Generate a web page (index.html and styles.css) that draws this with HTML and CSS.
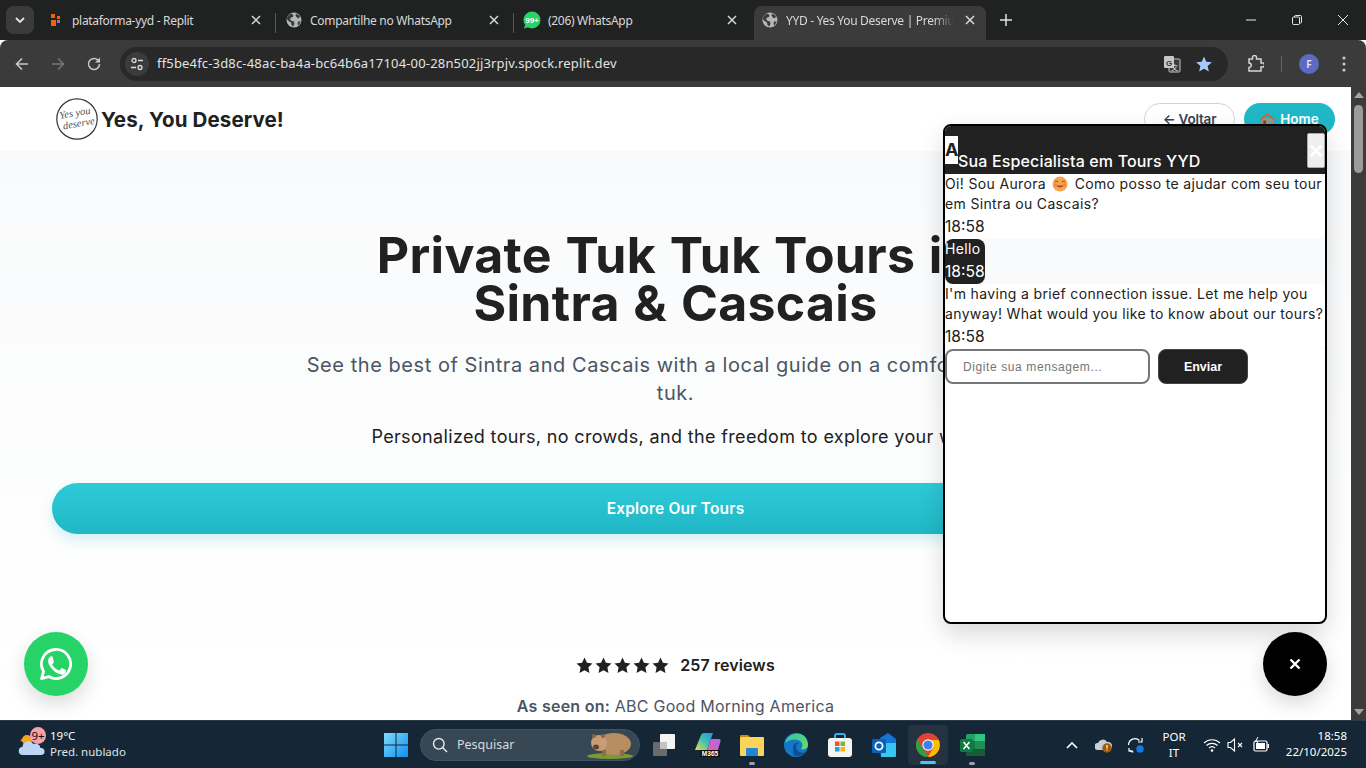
FILE: index.html
```html
<!DOCTYPE html>
<html lang="pt">
<head>
<meta charset="utf-8">
<title>YYD - Yes You Deserve</title>
<link rel="stylesheet" href="styles.css">
</head>
<body>
<svg class="defs" width="0" height="0" aria-hidden="true">
  <symbol id="globe" viewBox="0 0 16 16">
    <circle cx="8" cy="8" r="7.5" fill="#b4b6b8"/>
    <path d="M5 1.5 7.5 3 7 5 5 5.5 4 7.5 6 9 8 9.5 8.5 12 7 14.5 5.5 13 5 10.5 2.500 9 .8 7A7.500 7.500 0 0 1 5 1.500ZM10 1.500 13.500 3.500 14 5 12 6.500 10.500 5 9.500 3.500ZM12 9.500 14.800 9.500 12.500 13.500 11.500 12Z" fill="#3b3b3b"/>
  </symbol>
  <symbol id="close" viewBox="0 0 16 16">
    <path d="M4 4l8 8M12 4l-8 8" stroke="#d8d8d8" stroke-width="1.500" fill="none"/>
  </symbol>
  <symbol id="star" viewBox="0 0 24 24">
    <path d="M12 .8l3.400 7.300 7.900 1-5.800 5.500 1.500 7.900L12 18.600l-7 3.900 1.500-7.900L.7 9.100l7.900-1z" fill="#212121"/>
  </symbol>
</svg>

<header class="tabstrip">
  <button class="tab-menu" type="button">
    <svg width="10" height="6" viewBox="0 0 10 6"><path d="M1 1l4 4 4-4" stroke="#e3e3e3" stroke-width="1.800" fill="none"/></svg>
  </button>
  <div class="tab tab-sep">
    <svg class="favicon" viewBox="0 0 16 16"><rect x="3" y="2" width="4" height="4" fill="#f26207"/><rect x="9" y="4" width="3" height="3" fill="#f26207"/><rect x="3" y="8" width="5" height="6" fill="#f26207"/><rect x="9" y="8" width="3" height="3" fill="#a268d8"/></svg>
    <span class="tab-title">plataforma-yyd - Replit</span>
    <svg class="tab-close"><use href="#close"/></svg>
  </div>
  <div class="tab tab-sep">
    <svg class="favicon"><use href="#globe"/></svg>
    <span class="tab-title">Compartilhe no WhatsApp</span>
    <svg class="tab-close"><use href="#close"/></svg>
  </div>
  <div class="tab">
    <svg class="favicon favicon-wa" viewBox="0 0 18 18"><circle cx="9" cy="9" r="8.500" fill="#25d366"/><path d="M1 17.500l1.500-5 3.500 3.500z" fill="#25d366"/><text x="9" y="12" class="wa-badge-text">99+</text></svg>
    <span class="tab-title">(206) WhatsApp</span>
    <svg class="tab-close"><use href="#close"/></svg>
  </div>
  <div class="tab tab-active">
    <svg class="favicon"><use href="#globe"/></svg>
    <span class="tab-title tab-fade">YYD - Yes You Deserve | Premium Tours</span>
    <svg class="tab-close"><use href="#close"/></svg>
  </div>
  <svg class="new-tab" width="12" height="12" viewBox="0 0 12 12"><path d="M6 0v12M0 6h12" stroke="#e3e3e3" stroke-width="1.500"/></svg>
  <div class="win-controls">
    <svg width="10" height="10" viewBox="0 0 10 10"><path d="M0 5h10" stroke="#e6e6e6" stroke-width="1"/></svg>
    <svg width="10" height="10" viewBox="0 0 10 10"><rect x=".5" y="2" width="7" height="7.500" rx="1" fill="none" stroke="#e6e6e6"/><path d="M2.500 2V1.500a1 1 0 0 1 1-1h5a1 1 0 0 1 1 1v5.500a1 1 0 0 1-1 1H8" fill="none" stroke="#e6e6e6"/></svg>
    <svg width="10" height="10" viewBox="0 0 10 10"><path d="M0 0l10 10M10 0L0 10" stroke="#e6e6e6"/></svg>
  </div>
</header>

<nav class="toolbar">
  <svg class="nav-icon" viewBox="0 0 16 16"><path d="M14 8H2.500M8 2.500L2.500 8 8 13.500" stroke="#c7c7c7" stroke-width="1.600" fill="none"/></svg>
  <svg class="nav-icon nav-gap" viewBox="0 0 16 16"><path d="M2 8h11.500M8 2.500L13.500 8 8 13.500" stroke="#757575" stroke-width="1.600" fill="none"/></svg>
  <svg class="nav-icon nav-gap" viewBox="0 0 16 16"><path d="M13.500 8a5.500 5.500 0 1 1-1.600-3.900L13.500 5.700" stroke="#c7c7c7" stroke-width="1.600" fill="none"/><path d="M14 1.500V6.500H9z" fill="#c7c7c7"/></svg>
  <div class="omnibox">
    <span class="site-settings">
      <svg width="14" height="14" viewBox="0 0 14 14"><circle cx="4" cy="3.500" r="2" fill="none" stroke="#dcdcdc" stroke-width="1.300"/><path d="M8 3.500h5M1 10.500h5" stroke="#dcdcdc" stroke-width="1.300"/><circle cx="10" cy="10.500" r="2" fill="none" stroke="#dcdcdc" stroke-width="1.300"/></svg>
    </span>
    <span class="url">ff5be4fc-3d8c-48ac-ba4a-bc64b6a17104-00-28n502jj3rpjv.spock.replit.dev</span>
    <svg class="translate" width="18" height="18" viewBox="0 0 18 18"><rect x="6" y="4" width="11" height="13" rx="1" fill="#3a3a3a" stroke="#c7c7c7"/><rect x="1" y="1" width="10" height="12" rx="1" fill="#c7c7c7"/><text x="6" y="10.500" class="tr-g">G</text><text x="11.500" y="14.500" class="tr-x">文</text></svg>
    <svg class="bookmark" width="18" height="18" viewBox="0 0 24 24"><path d="M12 2l3 7 7.500.7-5.700 5 1.700 7.300L12 18.200 5.500 22l1.700-7.300-5.700-5L9 9z" fill="#a8c7fa"/></svg>
  </div>
  <svg class="ext" width="18" height="18" viewBox="0 0 18 18"><path d="M3 5h3.500V3.500a2 2 0 0 1 4 0V5H15v4h1.500a2 2 0 0 1 0 4H15v4H3v-3.500a2 2 0 0 0 0-4.500z" transform="translate(0 -1)" fill="none" stroke="#d5d5d5" stroke-width="1.500"/></svg>
  <span class="tool-sep"></span>
  <span class="avatar">F</span>
  <svg class="kebab" width="4" height="16" viewBox="0 0 4 16"><circle cx="2" cy="2" r="1.600" fill="#c7c7c7"/><circle cx="2" cy="8" r="1.600" fill="#c7c7c7"/><circle cx="2" cy="14" r="1.600" fill="#c7c7c7"/></svg>
</nav>

<div class="viewport">
  <main class="page">
    <div class="site-header">
      <div class="brand">
        <svg class="brand-logo" viewBox="0 0 42 42">
          <circle cx="21" cy="21" r="20.200" fill="#fff" stroke="#333" stroke-width="1.200"/>
          <g transform="rotate(-10 21 21)">
            <text x="20" y="18" class="logo-text">Yes you</text>
            <text x="22" y="29" class="logo-text">deserve</text>
          </g>
        </svg>
        <span class="brand-name">Yes, You Deserve!</span>
      </div>
      <div class="header-actions">
        <a class="pill pill-outline">← Voltar</a>
        <a class="pill pill-solid">
          <svg width="15" height="15" viewBox="0 0 16 16"><path d="M2 15V7h12v8z" fill="#c98a62"/><path d="M0 8l8-7 8 7-1 1-7-6-7 6z" fill="#e0592f"/><rect x="3.500" y="9" width="3" height="6" fill="#7a4b35"/><rect x="9" y="9" width="3.500" height="3" fill="#57a8d8"/></svg>
          Home
        </a>
      </div>
    </div>

    <section class="hero">
      <h1>Private Tuk Tuk Tours in<br>Sintra &amp; Cascais</h1>
      <p class="hero-sub">See the best of Sintra and Cascais with a local guide on a comfortable tuk tuk.</p>
      <p class="hero-line">Personalized tours, no crowds, and the freedom to explore your way.</p>
      <div class="hero-actions">
        <a class="cta cta-primary">Explore Our Tours</a>
        <a class="cta cta-ghost">Talk to Our Team</a>
      </div>
      <div class="rating">
        <span class="stars">
          <svg><use href="#star"/></svg><svg><use href="#star"/></svg><svg><use href="#star"/></svg><svg><use href="#star"/></svg><svg><use href="#star"/></svg>
        </span>
        <span class="rating-count">257 reviews</span>
      </div>
      <p class="seen-on"><strong>As seen on:</strong> ABC Good Morning America</p>
    </section>
  </main>

  <aside class="scrollbar">
    <span class="sb-up"></span>
    <span class="sb-thumb"></span>
    <span class="sb-down"></span>
  </aside>

  <section class="chat">
    <div class="chat-head">
      <span class="chat-avatar">A</span>
      <span class="chat-title">Sua Especialista em Tours YYD</span>
      <button class="chat-x" type="button">×</button>
    </div>
    <div class="chat-log">
      <div class="msg msg-bot">
        <p>Oi! Sou Aurora <svg class="smile" width="16" height="16" viewBox="0 0 16 16"><circle cx="8" cy="8" r="7.500" fill="#f8a54a"/><path d="M3 6q1.500-1.500 3 0M10 6q1.500-1.500 3 0" stroke="#7c4a1e" fill="none"/><path d="M4 9.500q4 4 8 0z" fill="#a6461e"/><circle cx="3.500" cy="9" r="1.500" fill="#ef7a6d"/><circle cx="12.500" cy="9" r="1.500" fill="#ef7a6d"/></svg> Como posso te ajudar com seu tour em Sintra ou Cascais?</p>
        <time>18:58</time>
      </div>
      <div class="msg msg-user">
        <p>Hello</p>
        <time>18:58</time>
      </div>
      <div class="msg msg-bot">
        <p>I'm having a brief connection issue. Let me help you anyway! What would you like to know about our tours?</p>
        <time>18:58</time>
      </div>
    </div>
    <form class="chat-form">
      <input class="chat-input" type="text" placeholder="Digite sua mensagem...">
      <button class="chat-send" type="button">Enviar</button>
    </form>
  </section>

  <a class="fab fab-wa">
    <svg width="36" height="36" viewBox="0 0 24 24"><path d="M12 2.300A9.700 9.700 0 0 0 3.700 17L2.400 21.700l4.800-1.300A9.700 9.700 0 1 0 12 2.300z" fill="none" stroke="#fff" stroke-width="1.900" stroke-linejoin="round"/><path d="M8.900 6.900c-.3 0-.7.100-1 .5-.4.400-1.200 1.200-1.200 2.800s1.200 3.200 1.400 3.400c.2.200 2.300 3.600 5.700 4.900 2.800 1.100 3.400.9 4-.1-.1 0 .9-1.100 1-2.100-.1-.2-.2-.3-.5-.5l-2.100-1c-.3-.1-.5-.2-.7.100l-1 1.200c-.2.200-.4.300-.7.100-1.800-.8-3-1.600-4.200-3.600-.2-.3 0-.5.100-.6l.8-1c.1-.2.100-.4 0-.6L9.800 7.400c-.2-.5-.6-.5-.9-.5z" fill="#fff"/></svg>
  </a>
  <a class="fab fab-close">
    <svg width="12" height="12" viewBox="0 0 12 12"><path d="M1.500 1.500l9 9M10.500 1.500l-9 9" stroke="#fff" stroke-width="2.400"/></svg>
  </a>
</div>

<footer class="taskbar">
  <div class="tb-weather">
    <svg class="weather-icon" width="28" height="28" viewBox="0 0 28 28">
      <circle cx="9" cy="9" r="5" fill="#f5a623"/><path d="M2 10l6-6 2 7z" fill="#f5a623"/>
      <path d="M5 24a4 4 0 0 1-.5-8 6 6 0 0 1 11-3 5 5 0 0 1 7 4 3.500 3.500 0 0 1 1 7z" fill="#bcd4f5"/>
    </svg>
    <span class="weather-badge">9+</span>
    <div class="weather-text">
      <span>19°C</span>
      <span class="weather-sub">Pred. nublado</span>
    </div>
  </div>
  <svg class="win-logo" width="24" height="24" viewBox="0 0 24 24">
    <defs><linearGradient id="wg" x1="0" y1="0" x2="1" y2="1"><stop offset="0" stop-color="#7fdcfb"/><stop offset="1" stop-color="#0f8ff0"/></linearGradient></defs>
    <path d="M0 0h11.500v11.500H0zM12.500 0H24v11.500H12.500zM0 12.500h11.500V24H0zM12.500 12.500H24V24H12.500z" fill="url(#wg)"/>
  </svg>
  <div class="tb-search">
    <svg width="16" height="16" viewBox="0 0 16 16"><circle cx="6.800" cy="6.800" r="5.300" fill="none" stroke="#e8ecef" stroke-width="1.400"/><path d="M10.600 10.600l4.400 4.400" stroke="#e8ecef" stroke-width="1.400"/></svg>
    <span class="search-label">Pesquisar</span>
    <svg class="wombat" width="48" height="30" viewBox="0 0 48 30">
      <ellipse cx="24" cy="26" rx="23" ry="3" fill="#7c9a34"/>
      <ellipse cx="28" cy="14" rx="17" ry="11" fill="#b98d62"/>
      <ellipse cx="13" cy="13" rx="8" ry="8" fill="#c69d74"/>
      <circle cx="8" cy="6" r="2" fill="#8b6644"/><circle cx="17" cy="6" r="2" fill="#8b6644"/>
      <ellipse cx="10" cy="17" rx="3" ry="2.500" fill="#5b4433"/>
      <rect x="16" y="20" width="4" height="6" fill="#8f6b48"/><rect x="34" y="20" width="4" height="6" fill="#8f6b48"/>
    </svg>
  </div>
  <div class="tb-apps">
    <span class="app"><svg width="24" height="24" viewBox="0 0 24 24"><rect x="1" y="9" width="14" height="14" rx="1" fill="#6a6a6a"/><rect x="8" y="1" width="15" height="15" rx="1" fill="#f3f3f3"/><rect x="8" y="9" width="7" height="7" fill="#c3c3c3"/></svg></span>
    <span class="app"><svg width="28" height="28" viewBox="0 0 28 28"><defs><linearGradient id="m1" x1="0" y1="1" x2="1" y2="0"><stop offset="0" stop-color="#f7d94c"/><stop offset=".5" stop-color="#3ec6a8"/><stop offset="1" stop-color="#2b8cee"/></linearGradient><linearGradient id="m2" x1="0" y1="1" x2="1" y2="0"><stop offset="0" stop-color="#e85bb0"/><stop offset="1" stop-color="#a86de8"/></linearGradient></defs><path d="M1 19 7 4Q8 2 10 2H19L13 19z" fill="url(#m1)"/><path d="M13 19 17 8H25Q27 8 26.500 10L24 19z" fill="url(#m2)"/><rect x="6" y="19" width="20" height="7" fill="#111"/><text x="16" y="25" class="m365">M365</text></svg></span>
    <span class="app"><svg width="24" height="24" viewBox="0 0 24 24"><path d="M0 3a1 1 0 0 1 1-1h7l2 2h-10z" fill="#c98f10"/><rect y="4" width="24" height="19" rx="1" fill="#fcd45c"/><rect x="6" y="15" width="12" height="8" rx="1" fill="#1e88d4"/></svg><i class="dot"></i></span>
    <span class="app"><svg width="26" height="26" viewBox="0 0 26 26"><defs><linearGradient id="e1" x1="0" y1="0" x2="1" y2="1"><stop offset="0" stop-color="#2fc4a8"/><stop offset="1" stop-color="#6bdd62"/></linearGradient></defs><circle cx="13" cy="13" r="12" fill="#1478c8"/><path d="M2 11C4 3 12 0 18 2c5 2 7 7 7 11 0 3-3 5-7 4 2-2 2-6-1-8-5-3-11-1-15 2z" fill="url(#e1)"/><path d="M10 15c0-3 3-5 6-4-3 0-4 5-1 8 2 2 5 2 7 1-3 4-8 5-11 3-1-2-1-5-1-8z" fill="#0e4f94"/></svg></span>
    <span class="app"><svg width="24" height="26" viewBox="0 0 24 26"><path d="M7 7V4a2 2 0 0 1 2-2h6a2 2 0 0 1 2 2v3" fill="none" stroke="#2ab0e8" stroke-width="2"/><rect y="6" width="24" height="19" rx="3" fill="#f4f4f4"/><rect x="7" y="9.500" width="4.500" height="4.500" fill="#e8532a"/><rect x="12.500" y="9.500" width="4.500" height="4.500" fill="#7cb82f"/><rect x="7" y="15" width="4.500" height="4.500" fill="#1ca0e8"/><rect x="12.500" y="15" width="4.500" height="4.500" fill="#fbb40c"/></svg></span>
    <span class="app"><svg width="26" height="26" viewBox="0 0 26 26"><path d="M9 6l8-5 8 6v13H9z" fill="#1476d2"/><path d="M9 11h16v13a1 1 0 0 1-1 1H10z" fill="#37c6f0"/><rect x="1" y="7" width="14" height="14" rx="1.500" fill="#0a5fb8"/><circle cx="8" cy="14" r="3.600" fill="none" stroke="#fff" stroke-width="1.800"/></svg></span>
    <span class="app app-active"><svg width="24" height="24" viewBox="0 0 24 24"><circle cx="12" cy="12" r="12" fill="#e44234"/><path d="M12 24A12 12 0 0 1 1.600 6L7 15.500 12.500 24z" fill="#2f9e44"/><path d="M12 7h10.700A12 12 0 0 1 12 24l5.500-9.500z" fill="#fbbc04"/><circle cx="12" cy="12" r="5.700" fill="#fff"/><circle cx="12" cy="12" r="4.600" fill="#3b82ee"/></svg><i class="bar"></i></span>
    <span class="app"><svg width="25" height="24" viewBox="0 0 25 24"><rect x="6" y="1" width="19" height="22" rx="1.500" fill="#21a366"/><rect x="15" y="1" width="10" height="7" fill="#33c481"/><rect x="6" y="8" width="9" height="8" fill="#107c41"/><rect x="15" y="8" width="10" height="8" fill="#1f8f56"/><rect x="6" y="16" width="19" height="7" fill="#185c37"/><rect x="0" y="6" width="13" height="13" rx="1.500" fill="#0f7b40"/><path d="M3.500 9l6 7M9.500 9l-6 7" stroke="#fff" stroke-width="1.600"/></svg><i class="dot"></i></span>
  </div>
  <div class="tb-tray">
    <svg class="tray-chevron" width="12" height="8" viewBox="0 0 12 8"><path d="M1 7l5-5 5 5" stroke="#fff" stroke-width="1.600" fill="none"/></svg>
    <svg class="tray-cloud" width="18" height="16" viewBox="0 0 18 16"><path d="M3 13a3.500 3.500 0 0 1 0-7 5 5 0 0 1 9-1 4 4 0 0 1 2 8z" fill="#c9ced2"/><circle cx="12" cy="11" r="4.700" fill="#a25a0a"/><path d="M12 8v3.500M12 12.500v1" stroke="#fff" stroke-width="1.200"/></svg>
    <svg class="tray-sync" width="18" height="18" viewBox="0 0 18 18"><path d="M1.500 9a6.500 6.500 0 0 1 11-4.500M15 2v4h-4M6 15H2v-3" stroke="#fff" stroke-width="1.200" fill="none"/><path d="M2.500 14.500a6.500 6.500 0 0 0 4 1.500" stroke="#fff" stroke-width="1.200" fill="none"/><circle cx="13" cy="13" r="3.700" fill="#1679e8"/></svg>
    <div class="tray-lang"><span>POR</span><span>IT</span></div>
    <svg class="tray-wifi" width="18" height="14" viewBox="0 0 18 14"><path d="M1 5a11.500 11.500 0 0 1 16 0M3.500 7.500a8 8 0 0 1 11 0M6 10a4.500 4.500 0 0 1 6 0" stroke="#fff" stroke-width="1.200" fill="none"/><circle cx="9" cy="12.500" r="1.300" fill="#fff"/></svg>
    <svg class="tray-mute" width="17" height="14" viewBox="0 0 17 14"><path d="M1 4.500h2.500L7.500 1v12l-4-3.500H1z" fill="none" stroke="#fff" stroke-width="1.100"/><path d="M11 5l4 4M15 5l-4 4" stroke="#fff" stroke-width="1.100"/></svg>
    <svg class="tray-batt" width="17" height="16" viewBox="0 0 17 16"><rect x="1" y="4" width="13" height="10" rx="1.500" fill="none" stroke="#fff" stroke-width="1.200"/><rect x="3" y="6" width="9" height="6" fill="#fff"/><rect x="14.500" y="7" width="1.500" height="4" fill="#fff"/><path d="M5 0L2.500 4.500H5L3.500 8" stroke="#fff" fill="none"/></svg>
    <div class="clock"><span>18:58</span><span>22/10/2025</span></div>
  </div>
</footer>
</body>
</html>
```

FILE: styles.css
```css
* { box-sizing: border-box; }
html, body { margin: 0; padding: 0; }
body {
  width: 1366px;
  height: 768px;
  overflow: hidden;
  display: flex;
  flex-direction: column;
  font-family: "Inter", "Liberation Sans", sans-serif;
  color: #212121;
  background: #fff;
}
.defs { position: absolute; }
p { margin: 0; }
a { text-decoration: none; }

/* ---------- browser chrome ---------- */
.tabstrip {
  height: 40px;
  flex: none;
  display: flex;
  align-items: flex-end;
  padding-left: 6px;
  background: #202222;
  font-family: "Noto Sans", "Open Sans", sans-serif;
  font-size: 12px;
  color: #d8d8d8;
}
.tab-menu {
  width: 28px;
  height: 28px;
  margin: 0 4px 6px 0;
  padding: 0;
  border: 0;
  border-radius: 8px;
  background: #3b3b3b;
  display: flex;
  align-items: center;
  justify-content: center;
}
.tab {
  position: relative;
  width: 238px;
  height: 34px;
  display: flex;
  align-items: center;
  gap: 8px;
  padding: 0 12px 6px 10px;
}
.tab-sep::after {
  content: "";
  position: absolute;
  right: 0;
  top: 7px;
  width: 1px;
  height: 20px;
  background: #5a5a5a;
}
.tab-active {
  width: 232px;
  margin: 0 2px;
  padding: 0 8px 6px;
  background: #3b3b3b;
  border-radius: 8px 8px 0 0;
}
.favicon { width: 16px; height: 16px; flex: none; }
.favicon-wa { width: 18px; height: 18px; margin: 0 -1px 0 -1px; overflow: visible; }
.wa-badge-text { font: 700 8px "Liberation Sans", sans-serif; fill: #fff; text-anchor: middle; }
.tab-title { flex: 1; min-width: 0; white-space: nowrap; overflow: hidden; letter-spacing: -.3px; }
.tab-fade { mask-image: linear-gradient(90deg, #000 88%, transparent 100%); }
.tab-close { width: 16px; height: 16px; flex: none; }
.new-tab { margin: 0 0 14px 12px; }
.win-controls {
  margin-left: auto;
  width: 138px;
  height: 40px;
  display: flex;
  align-items: center;
  justify-content: space-between;
  padding: 0 18px 0 18px;
}

.toolbar {
  height: 47px;
  flex: none;
  display: flex;
  align-items: center;
  padding-left: 14px;
  background: #3b3b3b;
  border-radius: 8px 8px 0 0;
}
.nav-icon { width: 16px; height: 16px; flex: none; }
.nav-gap { margin-left: 20px; }
.omnibox {
  width: 1108px;
  height: 34px;
  margin-left: 18px;
  display: flex;
  align-items: center;
  padding: 0 15px 0 5px;
  border-radius: 17px;
  background: #282828;
}
.site-settings {
  width: 24px;
  height: 24px;
  border-radius: 50%;
  background: #3b3b3b;
  display: flex;
  align-items: center;
  justify-content: center;
}
.url {
  margin: 0 0 2px 8px;
  font-family: "Noto Sans", sans-serif;
  font-size: 13px;
  letter-spacing: .17px;
  color: #e3e3e3;
  white-space: nowrap;
}
.translate { margin-left: auto; }
.tr-g { font: 700 8px "Liberation Sans", sans-serif; fill: #333; text-anchor: middle; }
.tr-x { font: 7px "Noto Sans CJK SC", sans-serif; fill: #ddd; text-anchor: middle; }
.bookmark { margin-left: 14px; }
.ext { margin-left: 18px; }
.tool-sep { width: 1px; height: 16px; margin-left: 17px; background: #666; }
.avatar {
  width: 20px;
  height: 20px;
  margin-left: 17px;
  border-radius: 50%;
  background: #5c6bc0;
  color: #e8e8f8;
  font-family: "Noto Sans", sans-serif;
  font-size: 10px;
  font-weight: 600;
  display: flex;
  align-items: center;
  justify-content: center;
}
.kebab { margin-left: 23px; }

/* ---------- page ---------- */
.viewport {
  position: relative;
  height: 633px;
  flex: none;
  display: flex;
  overflow: hidden;
}
.page { flex: 1; min-width: 0; overflow: hidden; }
.site-header {
  height: 64px;
  display: flex;
  align-items: center;
  justify-content: space-between;
  padding: 0 16px 0 56px;
  background: #fff;
}
.brand { display: flex; align-items: center; gap: 3px; }
.brand-logo { width: 42px; height: 42px; }
.logo-text { font: italic 10.500px "Liberation Serif", serif; fill: #555; text-anchor: middle; }
.brand-name { font-size: 20.500px; font-weight: 700; letter-spacing: .12px; color: #212121; }
.header-actions { display: flex; gap: 9px; }
.pill {
  width: 91px;
  height: 32px;
  border-radius: 16px;
  display: flex;
  align-items: center;
  justify-content: center;
  gap: 5px;
  font-size: 13.500px;
  font-weight: 600;
}
.pill-outline { border: 1px solid #d1d5db; background: #fff; color: #374151; letter-spacing: -.2px; }
.pill-solid { background: #20b8c6; color: #fff; }

.hero {
  height: 569px;
  padding: 80px 52px 0;
  text-align: center;
  background: linear-gradient(180deg, #f9fafb 0%, #fff 90%);
}
.hero h1 {
  margin: 0 0 24px;
  font-size: 50px;
  line-height: 48px;
  font-weight: 700;
  letter-spacing: .3px;
  word-spacing: 1.500px;
  color: #212121;
}
.hero-sub {
  max-width: 768px;
  margin: 0 auto 16px;
  font-size: 20px;
  line-height: 28px;
  letter-spacing: .55px;
  color: #4b5563;
}
.hero-line { margin-bottom: 32px; font-size: 18px; line-height: 28px; letter-spacing: .35px; color: #212121; }
.hero-actions { display: flex; flex-direction: column; gap: 16px; }
.cta {
  height: 51px;
  border-radius: 26px;
  display: flex;
  align-items: center;
  justify-content: center;
  font-size: 15.500px;
  font-weight: 600;
  letter-spacing: .2px;
  color: #fff;
}
.cta-primary {
  background: linear-gradient(180deg, #2ecad8, #20b7c6);
  box-shadow: 0 6px 14px rgba(32, 184, 198, .2);
}
.cta-ghost { height: 54px; border: 2px solid #fff; border-radius: 27px; }
.rating {
  margin-top: 48px;
  height: 26px;
  display: flex;
  align-items: center;
  justify-content: center;
  gap: 11px;
}
.stars { display: flex; gap: 2px; }
.stars svg { width: 17px; height: 17px; }
.rating-count { font-size: 16px; font-weight: 600; letter-spacing: .1px; color: #212121; }
.seen-on { margin-top: 16px; font-size: 16px; line-height: 24px; letter-spacing: .25px; color: #4b5563; }
.seen-on strong { font-weight: 600; }

.scrollbar {
  width: 15px;
  flex: none;
  background: #3b3b3b;
  display: flex;
  flex-direction: column;
  align-items: center;
}
.sb-up, .sb-down { width: 0; height: 0; border-left: 5px solid transparent; border-right: 5px solid transparent; }
.sb-up { margin-top: 5px; border-bottom: 6px solid #a3a3a3; }
.sb-thumb { width: 9px; height: 68px; margin-top: 7px; border-radius: 5px; background: #9b9b9b; }
.sb-down { margin-top: auto; margin-bottom: 5px; border-top: 6px solid #a3a3a3; }

/* ---------- chat overlay ---------- */
.chat {
  position: absolute;
  top: 37px;
  left: 943px;
  width: 384px;
  height: 500px;
  display: flex;
  flex-direction: column;
  border: 2px solid #000;
  border-radius: 8px;
  background: #fff;
  box-shadow: 0 10px 25px rgba(0, 0, 0, .15);
  overflow: hidden;
}
.chat-head {
  height: 48px;
  flex: none;
  display: flex;
  background: #212121;
  color: #fff;
}
.chat-avatar {
  width: 13px;
  height: 28px;
  margin-top: 10px;
  background: #fff;
  color: #212121;
  font-size: 18px;
  font-weight: 700;
  line-height: 28px;
  text-align: center;
}
.chat-title {
  align-self: flex-end;
  margin-bottom: 1px;
  font-size: 16px;
  line-height: 24px;
  font-weight: 500;
  letter-spacing: .15px;
}
.chat-x {
  width: 18px;
  height: 35px;
  margin: 7px 0 0 auto;
  padding: 0;
  border: 1px solid #aaa;
  border-radius: 2px;
  background: #efefef;
  color: #fff;
  font-size: 24px;
  font-weight: 700;
  line-height: 1;
  font-family: "Liberation Sans", sans-serif;
}
.chat-log { background: #f9fafb; flex: none; }
.msg time { display: block; padding-top: 2px; font-size: 15.600px; line-height: 22px; }
.msg p { font-size: 14px; line-height: 20px; letter-spacing: .35px; }
.msg-bot { padding: 0 0 1px; background: #fff; border-radius: 8px; color: #212121; }
.msg-user {
  width: fit-content;
  padding-bottom: 1px;
  background: #212121;
  border-radius: 8px;
  color: #fff;
}
.smile { vertical-align: -3px; margin: 0 2px; }
.chat-form { display: flex; gap: 8px; }
.chat-input {
  width: 205px;
  height: 35px;
  padding: 0 16px;
  border: 2px solid #767676;
  border-radius: 8px;
  font-family: "Liberation Sans", sans-serif;
  font-size: 12px;
  letter-spacing: .6px;
  background: #fff;
}
.chat-input::placeholder { color: #757575; opacity: 1; }
.chat-send {
  width: 90px;
  height: 35px;
  padding: 0;
  border: 1px solid #444;
  border-radius: 8px;
  background: #212121;
  color: #fff;
  font-family: "Liberation Sans", sans-serif;
  font-size: 12.500px;
  font-weight: 700;
}

.fab {
  position: absolute;
  top: 545px;
  width: 64px;
  height: 64px;
  border-radius: 50%;
  display: flex;
  align-items: center;
  justify-content: center;
  box-shadow: 0 8px 20px rgba(0, 0, 0, .15);
}
.fab-wa { left: 24px; background: #25d366; }
.fab-close { left: 1263px; background: #000; }

/* ---------- taskbar ---------- */
.taskbar {
  height: 48px;
  flex: none;
  display: flex;
  align-items: center;
  background: #152736;
  border-top: 1px solid #2b3b47;
  font-family: "Noto Sans", sans-serif;
  color: #fff;
  font-size: 11.500px;
}
.tb-weather {
  position: relative;
  width: 384px;
  display: flex;
  align-items: center;
  gap: 4px;
  padding-left: 18px;
}
.weather-icon { flex: none; }
.weather-badge {
  position: absolute;
  left: 30px;
  top: -2px;
  width: 16px;
  height: 17px;
  border-radius: 50%;
  background: #f6a0a8;
  color: #111;
  font-size: 11.500px;
  line-height: 17px;
  text-align: center;
}
.weather-text { display: flex; flex-direction: column; line-height: 16px; margin-top: -1px; }
.weather-sub { color: #dfe4e8; }
.tb-search {
  width: 220px;
  height: 32px;
  margin-left: 12px;
  display: flex;
  align-items: center;
  padding: 0 5px 0 11px;
  border-radius: 16px;
  border: 1px solid #43535f;
  background: #374754;
}
.search-label { margin-left: 9px; font-size: 12.500px; color: #d6dce0; }
.wombat { margin-left: auto; }
.tb-apps { display: flex; margin-left: 2px; }
.app {
  position: relative;
  width: 44px;
  height: 40px;
  display: flex;
  align-items: center;
  justify-content: center;
}
.app-active { background: #24333f; border-radius: 4px; width: 40px; margin: 0 2px; }
.app .dot {
  position: absolute;
  bottom: 0;
  left: 19px;
  width: 6px;
  height: 3px;
  border-radius: 2px;
  background: #9aa4ab;
}
.app .bar {
  position: absolute;
  bottom: 1px;
  left: 12px;
  width: 16px;
  height: 3px;
  border-radius: 2px;
  background: #4cc2ff;
}
.m365 { font: 700 6.500px "Liberation Sans", sans-serif; fill: #fff; text-anchor: middle; }
.tb-tray { display: flex; align-items: center; margin-left: 72px; }
.tray-chevron { flex: none; }
.tray-cloud { margin-left: 17px; flex: none; }
.tray-sync { margin-left: 14px; flex: none; }
.tray-lang {
  width: 32px;
  margin-left: 13px;
  display: flex;
  flex-direction: column;
  align-items: center;
  font-size: 11.500px;
  line-height: 16px;
}
.tray-wifi { margin-left: 13px; flex: none; }
.tray-mute { margin-left: 6px; flex: none; }
.tray-batt { margin-left: 9px; flex: none; }
.clock {
  width: 70px;
  margin: -1px 0 0 7px;
  display: flex;
  flex-direction: column;
  align-items: flex-end;
  font-size: 11.500px;
  line-height: 16px;
}
```
